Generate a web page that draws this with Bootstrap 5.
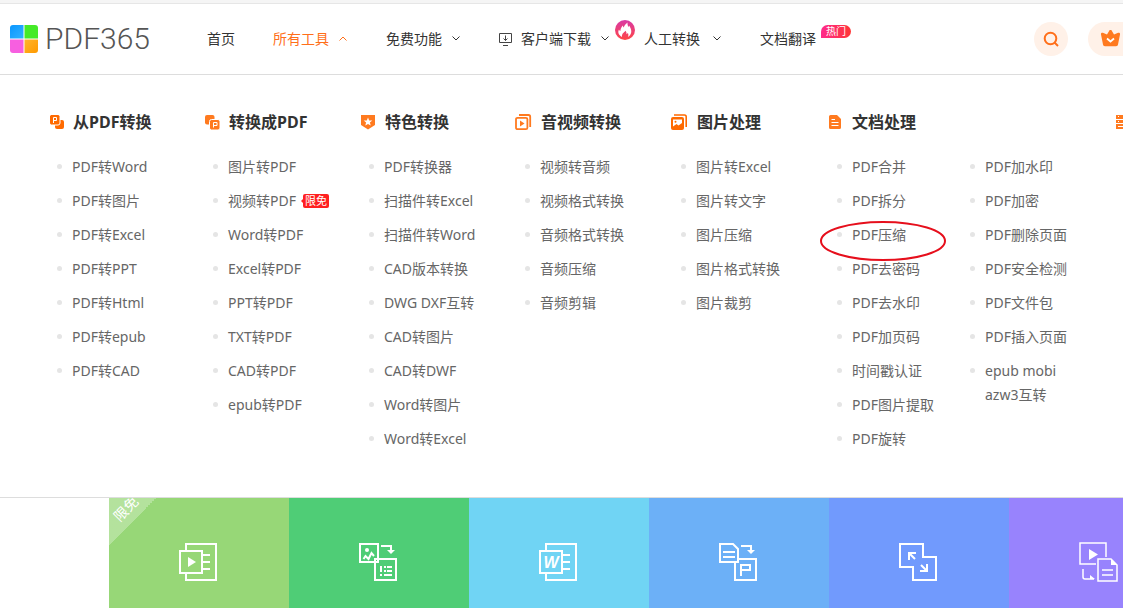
<!DOCTYPE html>
<html lang="zh-CN">
<head>
<meta charset="utf-8">
<meta name="viewport" content="width=device-width, initial-scale=1">
<title>PDF365</title>
<link href="https://cdn.jsdelivr.net/npm/bootstrap@5.3.0/dist/css/bootstrap.min.css" rel="stylesheet">
<style>
:root{--brand:#ff6f1a}
body{font-family:"Noto Sans","Noto Sans CJK SC",sans-serif;font-size:14px;line-height:24px;color:#333;background:#fff;overflow-x:hidden}
svg{flex:none;display:block}
.topstrip{height:4px;background:#f5f5f5;border-bottom:1px solid #e6e6e6}
.site-head{height:71px;border-bottom:1px solid #ddd}
.brand-name{font-family:Roboto,sans-serif;font-weight:300;font-size:30px;line-height:32px;color:#555;margin-left:5px}
.main-menu{gap:38px;margin-left:57px}
.menu-link{color:#333;text-decoration:none;background:none;border:0;padding:0;white-space:nowrap;display:flex;align-items:center;gap:9px}
.menu-link.current{color:var(--brand)}
.menu-link.far{gap:12px}
.hot{position:absolute;left:100%;top:-2px;margin-left:5px;width:30px;height:13px;line-height:13px;font-size:10px;color:#fff;text-align:center;background:linear-gradient(90deg,#ff2a8c,#ff3535);border-radius:7px 7px 7px 0}
.search-btn{width:34px;height:34px;border:0;background:#fff1e8}
.vip-link{width:35px;height:34px;padding-left:12px;background:#fff1e8;border-radius:17px 0 0 17px}
.tools{padding:35px 0 46px 50px;border-bottom:1px solid #ddd;overflow:hidden}
.tool-col{flex:0 0 156px}
.tool-col.wide{flex-basis:286px}
.tool-title{font-size:16px;line-height:24px;font-weight:700;height:24px;gap:8px;margin:0 0 21px;white-space:nowrap}
.tool-list{list-style:none;margin:0;padding:0 0 0 22px;flex:0 0 133px}
.tool-list li{position:relative;margin-bottom:10px}
.tool-list li:last-child{margin-bottom:0}
.tool-list li::before{content:"";position:absolute;left:-15px;top:9px;width:5px;height:5px;border-radius:50%;background:#e5e5e5}
.tool-list a{color:#666;text-decoration:none;white-space:nowrap}
.free{display:inline-block;position:relative;width:26px;height:14px;margin-left:7px;vertical-align:1px;background:#ff2020;border-radius:2px;color:#fff;font-size:11px;line-height:14px;text-align:center}
.free::before{content:"";position:absolute;left:-2px;top:5px;border:2px solid transparent;border-right-color:#ff2020;border-left:0}
.ring{position:absolute;left:-33px;top:-2px;pointer-events:none}
.tiles{padding-left:109px;overflow:hidden}
.tile{flex:0 0 180px;padding:45px 0 25px;overflow:hidden}
.t-lime{background:#97d777}.t-green{background:#4fcd76}.t-cyan{background:#70d4f4}.t-sky{background:#6cb0f7}.t-blue{background:#719afd}.t-violet{background:#9883fd}
.ribbon{position:absolute;left:0;top:0;width:47px;height:47px;background:linear-gradient(135deg,rgba(255,255,255,.28) 50%,transparent 50%)}
.ribbon span{position:absolute;left:-3px;top:-1px;width:40px;line-height:24px;text-align:center;color:#fff;transform:rotate(-45deg)}
</style>
</head>
<body>
<div class="topstrip"></div>
<header class="site-head d-flex align-items-center overflow-hidden">
  <a href="#" class="d-flex align-items-center text-decoration-none ms-2" aria-label="PDF365">
    <svg width="32" height="28" viewBox="-2 0 32 28"><defs><linearGradient id="lb" x2="1" y2="1"><stop stop-color="#0a96ff"/><stop offset="1" stop-color="#30b2ff"/></linearGradient><linearGradient id="lo" x2="1" y2="1"><stop stop-color="#ffb42c"/><stop offset="1" stop-color="#ff9a00"/></linearGradient></defs>
      <path d="M3 0H13.500V13.500H0V3a3 3 0 0 1 3-3z" fill="url(#lb)"/><path d="M14.500 0H25a3 3 0 0 1 3 3V13.500H14.500z" fill="#45ea28"/><path d="M0 14.500H13.500V28H3a3 3 0 0 1-3-3z" fill="#f75fe0"/><path d="M14.500 14.500H28V25a3 3 0 0 1-3 3H14.500z" fill="url(#lo)"/></svg>
    <span class="brand-name">PDF365</span>
  </a>
  <nav class="main-menu d-flex align-items-center">
    <a href="#" class="menu-link">首页</a>
    <button class="menu-link current">所有工具<svg width="10" height="8" fill="none" stroke="currentColor"><path d="M1.500 5.500L5 2l3.500 3.500"/></svg></button>
    <button class="menu-link">免费功能<svg width="10" height="8" fill="none" stroke="currentColor"><path d="M1.500 1.500L5 5l3.500-3.500"/></svg></button>
    <div class="d-flex align-items-center">
      <button class="menu-link"><svg width="13" height="13" fill="none" stroke="#444"><path d="M.5.5h12v9H.5zM4 12.500h5M6.500 2.500v5M4.500 5.500l2 2 2-2"/></svg>客户端下载<svg width="10" height="8" fill="none" stroke="currentColor"><path d="M1.500 1.500L5 5l3.500-3.500"/></svg></button>
      <svg class="ms-1 me-2 mb-3" width="22" height="22" viewBox="-1 0 22 22"><defs><linearGradient id="fr" x2="0" y2="1"><stop stop-color="#d93aa6"/><stop offset="1" stop-color="#ff4545"/></linearGradient></defs><circle cx="10" cy="10" r="10" fill="url(#fr)"/><path d="M7 17C3.500 15 2.500 12 4 9.500c.4 1 .8 1.300 1.300 1.500C5.600 8 7 6.500 8 5.500c0 1 .2 1.500.7 2C9.500 5.500 10.500 4 12.500 2.500c-.2 2 .3 3.200 1 4.500.3-.5.5-.8.5-1.500 2.500 3.500 4 8-1 11.500.6-2 .5-3-.2-4-.4.7-.8 1-1.300 1.300.1-1.500-.2-2.500-1-3.500C9 12.500 6.500 14 7 17z" fill="#fff"/></svg>
      <button class="menu-link far">人工转换<svg width="10" height="8" fill="none" stroke="currentColor"><path d="M1.500 1.500L5 5l3.500-3.500"/></svg></button>
    </div>
    <a href="#" class="menu-link position-relative">文档翻译<span class="hot">热门</span></a>
  </nav>
  <div class="d-flex ms-auto">
    <button class="search-btn rounded-circle p-0 d-flex align-items-center justify-content-center me-3" aria-label="搜索"><svg width="16" height="16" fill="none" stroke="var(--brand)" stroke-width="2"><circle cx="7.500" cy="7.500" r="5.800"/><path d="M11.500 11.500l3.500 3.500"/></svg></button>
    <a href="#" class="vip-link d-flex align-items-center ms-1" aria-label="VIP"><svg width="21" height="18" viewBox="0 1 21 18"><path d="M10.500.5c.5 0 .8.3 1 .8l2.500 4.200 3.500-1.500c1.800-.5 2.800.2 2.500 1.500l-2 10c-.2 1-.8 1.700-2 1.700H5c-1.200 0-1.800-.7-2-1.700L1 5.500C.7 4.200 1.700 3.500 3.500 4L7 5.500l2.500-4.200c.2-.5.500-.8 1-.8z" fill="#ff7a1f"/><path d="M7 9.500l3.500 3 3.500-3" fill="none" stroke="#fff" stroke-width="1.800"/></svg></a>
  </div>
</header>

<section class="tools d-flex">
  <div class="tool-col">
    <h2 class="tool-title d-flex align-items-center"><svg width="15" height="15" fill="none"><path d="M9 5h3a2 2 0 0 1 2 2v5a2 2 0 0 1-2 2H7a2 2 0 0 1-2-2V8z" fill="#ff6a00"/><rect x="-.5" y="-.5" width="10.500" height="10.500" rx="2" fill="#ff6a00" stroke="#fff"/><path d="M3.500 8V2.500h3v3h-3" stroke="#fff"/></svg>从PDF转换</h2>
    <ul class="tool-list"><li><a href="#">PDF转Word</a></li><li><a href="#">PDF转图片</a></li><li><a href="#">PDF转Excel</a></li><li><a href="#">PDF转PPT</a></li><li><a href="#">PDF转Html</a></li><li><a href="#">PDF转epub</a></li><li><a href="#">PDF转CAD</a></li></ul>
  </div>
  <div class="tool-col">
    <h2 class="tool-title d-flex align-items-center"><svg width="15" height="15" viewBox="1 0 15 15" overflow="visible" fill="none"><rect width="9.500" height="9.500" rx="2" fill="#ff7a1f"/><rect x="4.500" y="4.500" width="10.500" height="10.500" rx="2" fill="#ff7a1f" stroke="#fff"/><path d="M8.500 12.500V7.500h3.500v3H8.500" stroke="#fff"/></svg>转换成PDF</h2>
    <ul class="tool-list"><li><a href="#">图片转PDF</a></li><li class="text-nowrap"><a href="#">视频转PDF<span class="free">限免</span></a></li><li><a href="#">Word转PDF</a></li><li><a href="#">Excel转PDF</a></li><li><a href="#">PPT转PDF</a></li><li><a href="#">TXT转PDF</a></li><li><a href="#">CAD转PDF</a></li><li><a href="#">epub转PDF</a></li></ul>
  </div>
  <div class="tool-col">
    <h2 class="tool-title d-flex align-items-center"><svg width="15" height="15" viewBox="1 0 15 15" overflow="visible"><path d="M0 0h14v10l-7 4.500L0 10z" fill="#ff7a1f"/><path d="M7 2.500l1.200 2.900 3.100.2-2.400 2 .8 3L7 9l-2.700 1.600.8-3-2.400-2 3.100-.2z" fill="#fff"/></svg>特色转换</h2>
    <ul class="tool-list"><li><a href="#">PDF转换器</a></li><li><a href="#">扫描件转Excel</a></li><li><a href="#">扫描件转Word</a></li><li><a href="#">CAD版本转换</a></li><li><a href="#">DWG DXF互转</a></li><li><a href="#">CAD转图片</a></li><li><a href="#">CAD转DWF</a></li><li><a href="#">Word转图片</a></li><li><a href="#">Word转Excel</a></li></ul>
  </div>
  <div class="tool-col">
    <h2 class="tool-title d-flex align-items-center"><svg width="15" height="16" viewBox="3 0 15 16" overflow="visible" fill="none" stroke="#ff7a1f" stroke-width="1.800"><rect x="1" y="3.800" width="11.400" height="11.400" rx="1.500"/><path d="M4 1h9.500a1.700 1.700 0 0 1 1.700 1.700V13"/><path d="M5 6.500v6l4.500-3z" fill="#ff7a1f" stroke="none"/></svg>音视频转换</h2>
    <ul class="tool-list"><li><a href="#">视频转音频</a></li><li><a href="#">视频格式转换</a></li><li><a href="#">音频格式转换</a></li><li><a href="#">音频压缩</a></li><li><a href="#">音频剪辑</a></li></ul>
  </div>
  <div class="tool-col">
    <h2 class="tool-title d-flex align-items-center"><svg width="15" height="16" viewBox="3 0 15 16" overflow="visible"><path d="M3 1h10.500a1.700 1.700 0 0 1 1.700 1.700V13" fill="none" stroke="#ff6a00" stroke-width="1.600"/><rect y="3" width="13" height="13" rx="2" fill="#ff6a00"/><path d="M2 12.500V5.500h9V9l-3.500 2.500L5.500 10z" fill="#fff"/><circle cx="4.500" cy="7.800" r="1" fill="#ff6a00"/></svg>图片处理</h2>
    <ul class="tool-list"><li><a href="#">图片转Excel</a></li><li><a href="#">图片转文字</a></li><li><a href="#">图片压缩</a></li><li><a href="#">图片格式转换</a></li><li><a href="#">图片裁剪</a></li></ul>
  </div>
  <div class="tool-col wide">
    <h2 class="tool-title d-flex align-items-center"><svg width="14" height="14" viewBox="1 0 14 14" overflow="visible"><path d="M1.500 0H8l4 4v8.500a1.500 1.500 0 0 1-1.500 1.500h-9A1.500 1.500 0 0 1 0 12.500v-11A1.500 1.500 0 0 1 1.500 0z" fill="#ff7a1f"/><path d="M2.500 4.500H6M2.500 7.500h7M2.500 10.500h7" stroke="#fff"/></svg>文档处理</h2>
    <div class="d-flex">
      <ul class="tool-list"><li><a href="#">PDF合并</a></li><li><a href="#">PDF拆分</a></li><li><a href="#">PDF压缩</a><svg class="ring" width="128" height="40" fill="none" stroke="#e60f1c" stroke-width="2"><ellipse cx="64" cy="20" rx="62" ry="19"/></svg></li><li><a href="#">PDF去密码</a></li><li><a href="#">PDF去水印</a></li><li><a href="#">PDF加页码</a></li><li><a href="#">时间戳认证</a></li><li><a href="#">PDF图片提取</a></li><li><a href="#">PDF旋转</a></li></ul>
      <ul class="tool-list"><li><a href="#">PDF加水印</a></li><li><a href="#">PDF加密</a></li><li><a href="#">PDF删除页面</a></li><li><a href="#">PDF安全检测</a></li><li><a href="#">PDF文件包</a></li><li><a href="#">PDF插入页面</a></li><li><a href="#">epub mobi<br>azw3互转</a></li></ul>
    </div>
  </div>
  <div class="tool-col">
    <h2 class="tool-title d-flex align-items-center"><svg width="14" height="14"><path d="M0 0h14v4H0zM0 5h14v3H0zM0 9h14v5H0z" fill="#ff7a1f"/><path d="M2 1.500h1M2 6.500h1M2 11.500h9" stroke="#fff"/></svg></h2>
  </div>
</section>

<section class="tiles d-flex">
  <a href="#" class="tile t-lime position-relative d-flex justify-content-center" aria-label="视频">
    <div class="ribbon"><span>限免</span></div>
    <svg width="40" height="40" fill="none" stroke="#fff" stroke-width="2"><path d="M7 7V1h30v36H7v-6M1 8h22v22H1zM24 12h7M24 19h7M24 26h7"/><path d="M9 14v10l8-5z" fill="#fff" stroke="none"/></svg>
  </a>
  <a href="#" class="tile t-green d-flex justify-content-center" aria-label="图片转换">
    <svg width="40" height="40" fill="none" stroke="#fff" stroke-width="2"><path d="M1 1h18v18H1zM16 16h21v21H16zM22 3h10v5M22 23v6M25 24h2M28 24h5M25 28h2M28 28h5M21 32h2M25 32h8"/><path d="M4.500 16l2-3 3 3 3-6 2.500 3"/><circle cx="8" cy="7" r="2" fill="#fff" stroke="none"/><path d="M28 7h8l-4 4z" fill="#fff" stroke="none"/></svg>
  </a>
  <a href="#" class="tile t-cyan d-flex justify-content-center" aria-label="Word">
    <svg width="40" height="40" fill="none" stroke="#fff" stroke-width="2"><path d="M7 7V1h30v36H7v-6M1 8h22v22H1zM24 12h7M24 19h7M24 26h7"/><text x="12" y="25" text-anchor="middle" font-family="Liberation Sans" font-size="16" font-weight="700" font-style="italic" fill="#fff" stroke="none">W</text></svg>
  </a>
  <a href="#" class="tile t-sky d-flex justify-content-center" aria-label="文档转PDF">
    <svg width="40" height="40" fill="none" stroke="#fff" stroke-width="2"><path d="M1 1h13l5 5v13H1zM4 9h12M4 14h12M20 16h17v21H16V20M22 3h10v5"/><path d="M28 7h8l-4 4z" fill="#fff" stroke="none"/><rect x="22" y="22" width="9" height="5"/><path d="M22 26v7"/></svg>
  </a>
  <a href="#" class="tile t-blue d-flex justify-content-center" aria-label="压缩">
    <svg width="40" height="40" fill="none" stroke="#fff" stroke-width="2"><path d="M1 1h23v13h13v23H14V24H1zM10 17v-7h7M10 10l6 6M28 21v7h-7M22 22l6 6"/></svg>
  </a>
  <a href="#" class="tile t-violet d-flex justify-content-center" aria-label="视频转文档">
    <svg width="40" height="40" viewBox="0 1 40 40" overflow="visible" fill="none" stroke="#fff" stroke-width="1.500"><path d="M27 15V1H1v21h16M19 17h13l6 6v16H19zM23 28h11M23 33h11M4 27v8q0 2 2 2h9"/><path d="M10 7v11l9-5.500zM11 33v4h5zM32 17v6h6z" fill="#fff" stroke="none"/></svg>
  </a>
</section>
<script src="https://cdn.jsdelivr.net/npm/bootstrap@5.3.0/dist/js/bootstrap.bundle.min.js"></script>
</body>
</html>
